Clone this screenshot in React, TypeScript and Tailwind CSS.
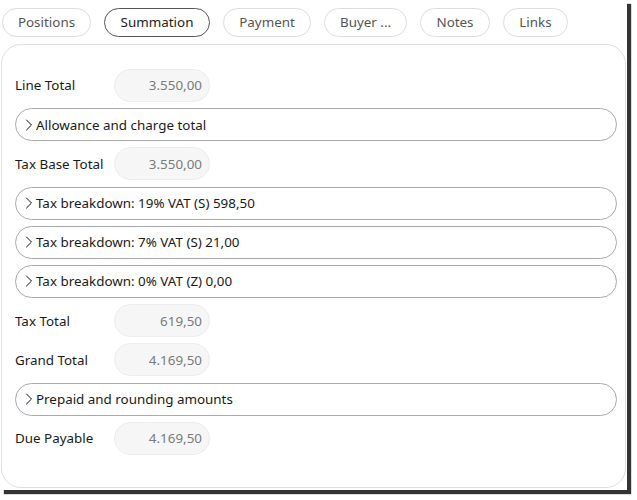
import { ChevronRight } from "lucide-react";

const tabs = [
  { label: "Positions", w: "w-[89px]" },
  { label: "Summation", w: "w-[106px]", active: true },
  { label: "Payment", w: "w-[88px]" },
  { label: "Buyer ...", w: "w-[83px]" },
  { label: "Notes", w: "w-[70px]" },
  { label: "Links", w: "w-[65px]" },
];

type Row =
  | { kind: "field"; label: string; value: string }
  | { kind: "group"; label: string };

const rows: Row[] = [
  { kind: "field", label: "Line Total", value: "3.550,00" },
  { kind: "group", label: "Allowance and charge total" },
  { kind: "field", label: "Tax Base Total", value: "3.550,00" },
  { kind: "group", label: "Tax breakdown: 19% VAT (S) 598,50" },
  { kind: "group", label: "Tax breakdown: 7% VAT (S) 21,00" },
  { kind: "group", label: "Tax breakdown: 0% VAT (Z) 0,00" },
  { kind: "field", label: "Tax Total", value: "619,50" },
  { kind: "field", label: "Grand Total", value: "4.169,50" },
  { kind: "group", label: "Prepaid and rounding amounts" },
  { kind: "field", label: "Due Payable", value: "4.169,50" },
];

export default function App() {
  return (
    <div
      className="w-[637px] h-[500px] bg-white text-[13.4px]"
      style={{ fontFamily: '"Noto Sans", "Open Sans", sans-serif' }}
    >
      <div className="w-[627px] h-[490px] bg-white shadow-[4px_4px_1px_rgba(30,30,30,0.9)] flex flex-col">
        {/* tabs */}
        <div className="flex gap-[13px] pl-[2px] pt-[8px]">
          {tabs.map((t) => (
            <button
              key={t.label}
              className={`${t.w} h-[29px] rounded-full border flex items-center justify-center ${
                t.active
                  ? "border-[#555] text-[#222]"
                  : "border-[#dcdcdc] text-[#555]"
              }`}
            >
              {t.label}
            </button>
          ))}
        </div>

        {/* panel */}
        <div className="ml-[1px] mt-[7px] w-[625px] h-[444px] rounded-[20px] border border-[#dedede] pl-[13px] pr-[8px] pt-[24px] flex flex-col gap-[6.2px]">
          {rows.map((r, i) =>
            r.kind === "field" ? (
              <div key={i} className="flex items-center h-[33px]">
                <div className="w-[99px] text-[#1a1a1a]">{r.label}</div>
                <div className="w-[96px] h-[33px] rounded-full bg-[#f6f6f6] border border-[#ececec] flex items-center justify-end pr-[7px] text-[#7a7a7a]">
                  {r.value}
                </div>
              </div>
            ) : (
              <div
                key={i}
                className="h-[33px] rounded-full border border-[#a8a8b0] flex items-center pl-[3px] text-[#1a1a1a]"
              >
                <ChevronRight size={20} strokeWidth={1.2} className="text-[#111] -mr-[3px]" />
                {r.label}
              </div>
            )
          )}
        </div>
      </div>
    </div>
  );
}
